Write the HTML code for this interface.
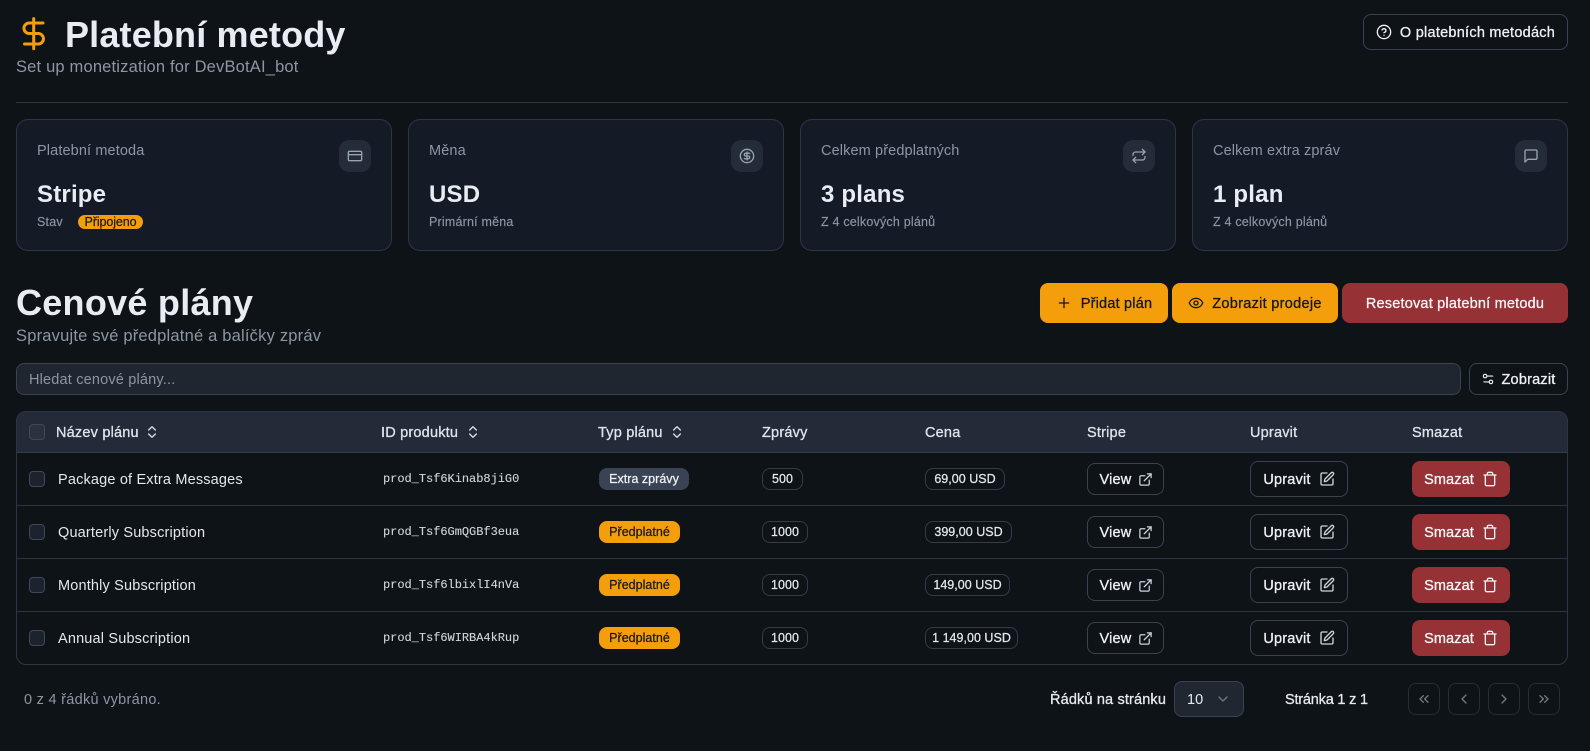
<!DOCTYPE html>
<html lang="cs"><head><meta charset="utf-8"><title>Platební metody</title>
<style>
*{box-sizing:border-box}
html,body{margin:0;width:1590px;height:751px;overflow:hidden;background:#0e1318;font-family:"Liberation Sans",sans-serif;color:#e6eaf0}
.a{position:absolute;white-space:nowrap}
.t{position:absolute;white-space:nowrap;line-height:20px;height:20px}
.m{-webkit-text-stroke:.3px currentColor}
.mut{color:#8d96a4}
.card{position:absolute;top:119px;width:376px;height:132px;background:#141b26;border:1px solid #2d3544;border-radius:12px}
.ib{position:absolute;top:20px;width:32px;height:32px;border-radius:10px;background:#242c39;display:flex;align-items:center;justify-content:center;color:#9aa3b0}
.lbl{font-size:14.5px;left:20px;top:21px;letter-spacing:.12px;color:#8d96a4}
.val{font-size:24px;font-weight:700;left:20px;top:61px;line-height:28px;height:28px;letter-spacing:.2px;color:#e9edf3}
.sub{font-size:12.5px;left:20px;top:92px;color:#8d96a4;letter-spacing:.2px;-webkit-text-stroke:.15px currentColor}
.btn{position:absolute;display:flex;align-items:center;justify-content:center;border-radius:8px;font-size:14.5px;white-space:nowrap;-webkit-text-stroke:.3px currentColor;letter-spacing:.1px}
.btn span{position:relative;top:1px}
.am{background:#f59e0b;color:#15191f}
.rd{background:#963135;color:#f4f5f7}
.ol{border:1px solid #3a4252;color:#eef1f5;background:#0e1318}
.ol svg{color:#cfd4dc}
svg{fill:none;stroke:currentColor;stroke-width:2;stroke-linecap:round;stroke-linejoin:round;flex:none;-webkit-text-stroke:0}
.cb{position:absolute;width:16px;height:16px;border:1px solid #3f4859;border-radius:4px;background:#1c232e}
.hr{position:absolute;left:17px;width:1550px;height:1px;background:#2d3544}
.th{font-size:14.5px;-webkit-text-stroke:.3px currentColor;letter-spacing:.2px;color:#dfe4ec;top:423px}
.nm{font-size:14.5px;left:58px;letter-spacing:.17px;color:#e3e7ee}
.id{font-family:"Liberation Mono",monospace;font-size:12px;left:383px;color:#cfd4dc;letter-spacing:-.03px;-webkit-text-stroke:.12px currentColor}
.pill{position:absolute;height:22px;display:flex;align-items:center;justify-content:center;border-radius:8px;font-size:12.5px;-webkit-text-stroke:.25px currentColor;letter-spacing:.02px;white-space:nowrap}
.po{border:1px solid #343c4b;color:#e3e7ee}
.pa{background:#f59e0b;color:#17191c;left:599px;width:81px}
.pg{background:#3a4354;color:#f0f2f6;left:599px;width:90px}
.pb{position:absolute;top:683px;width:32px;height:32px;border:1px solid #262d39;border-radius:8px;display:flex;align-items:center;justify-content:center;color:#727a87}
.vw{padding-left:2px}
</style></head><body>
<svg width="0" height="0" style="position:absolute"><defs>
<symbol id="ext" viewBox="0 0 24 24"><path d="M15 3h6v6"/><path d="M10 14 21 3"/><path d="M18 13v6a2 2 0 0 1-2 2H5a2 2 0 0 1-2-2V8a2 2 0 0 1 2-2h6"/></symbol>
<symbol id="pen" viewBox="0 0 24 24"><path d="M12 3H5a2 2 0 0 0-2 2v14a2 2 0 0 0 2 2h14a2 2 0 0 0 2-2v-7"/><path d="M18.375 2.625a1 1 0 0 1 3 3l-9.013 9.014a2 2 0 0 1-.853.505l-2.873.84a.5.5 0 0 1-.62-.62l.84-2.873a2 2 0 0 1 .506-.852z"/></symbol>
<symbol id="tr" viewBox="0 0 24 24"><path d="M3 6h18"/><path d="M19 6v14c0 1-1 2-2 2H7c-1 0-2-1-2-2V6"/><path d="M8 6V4c0-1 1-2 2-2h4c1 0 2 1 2 2v2"/></symbol>
<symbol id="sort" viewBox="0 0 24 24"><path d="m7 15 5 5 5-5"/><path d="m7 9 5-5 5 5"/></symbol>
</defs></svg>

<svg class="a" style="left:0;top:0;color:#f59e0b;stroke-width:3" width="60" height="60" viewBox="0 0 60 60"><path d="M33.7 18.6V48.8"/><path d="M43 23H29.2a5.25 5.25 0 0 0 0 10.5H38.2a5.25 5.25 0 0 1 0 10.5H24.5"/></svg>
<div class="a" style="left:65px;top:14px;font-size:36px;line-height:42px;font-weight:700;color:#e9edf3;letter-spacing:.17px">Platební metody</div>
<div class="t mut" style="left:16px;top:57px;font-size:16.5px;letter-spacing:.18px">Set up monetization for DevBotAI_bot</div>
<div class="btn ol" style="left:1363px;top:14px;width:205px;height:36px;gap:8px"><svg width="16" height="16" viewBox="0 0 24 24" style="color:#eef1f5"><circle cx="12" cy="12" r="10"/><path d="M9.09 9a3 3 0 0 1 5.83 1c0 2-3 3-3 3"/><path d="M12 17h.01"/></svg><span style="letter-spacing:.25px">O platebních metodách</span></div>
<div class="a" style="left:16px;top:102px;width:1552px;height:1px;background:#2d3544"></div>

<div class="card" style="left:16px"><div class="t lbl">Platební metoda</div><div class="ib" style="left:322px"><svg width="16" height="16" viewBox="0 0 24 24"><rect x="2" y="5" width="20" height="14" rx="2"/><line x1="2" x2="22" y1="10" y2="10"/></svg></div><div class="t val">Stripe</div><div class="t sub">Stav</div><div class="a" style="left:61px;top:95px;width:65px;height:14px;border-radius:7px;background:#f59e0b;color:#17191c;font-size:12.5px;line-height:14px;text-align:center;-webkit-text-stroke:.2px currentColor;letter-spacing:-.1px">Připojeno</div></div>
<div class="card" style="left:408px"><div class="t lbl">Měna</div><div class="ib" style="left:322px"><svg width="16" height="16" viewBox="0 0 24 24"><circle cx="12" cy="12" r="10"/><path d="M16 8h-6a2 2 0 1 0 0 4h4a2 2 0 1 1 0 4H8"/><path d="M12 18V6"/></svg></div><div class="t val">USD</div><div class="t sub">Primární měna</div></div>
<div class="card" style="left:800px"><div class="t lbl">Celkem předplatných</div><div class="ib" style="left:322px"><svg width="16" height="16" viewBox="0 0 24 24"><path d="m17 2 4 4-4 4"/><path d="M3 11v-1a4 4 0 0 1 4-4h14"/><path d="m7 22-4-4 4-4"/><path d="M21 13v1a4 4 0 0 1-4 4H3"/></svg></div><div class="t val">3 plans</div><div class="t sub">Z 4 celkových plánů</div></div>
<div class="card" style="left:1192px"><div class="t lbl">Celkem extra zpráv</div><div class="ib" style="left:322px"><svg width="16" height="16" viewBox="0 0 24 24"><path d="M21 15a2 2 0 0 1-2 2H7l-4 4V5a2 2 0 0 1 2-2h14a2 2 0 0 1 2 2z"/></svg></div><div class="t val">1 plan</div><div class="t sub">Z 4 celkových plánů</div></div>

<div class="a" style="left:16px;top:282px;font-size:36px;line-height:42px;font-weight:700;color:#e9edf3;letter-spacing:.27px">Cenové plány</div>
<div class="t mut" style="left:16px;top:326px;font-size:16.5px;letter-spacing:.2px">Spravujte své předplatné a balíčky zpráv</div>
<div class="btn am" style="left:1040px;top:283px;width:128px;height:40px;gap:9px"><svg width="16" height="16" viewBox="0 0 24 24"><path d="M5 12h14"/><path d="M12 5v14"/></svg><span style="letter-spacing:.2px">Přidat plán</span></div>
<div class="btn am" style="left:1172px;top:283px;width:166px;height:40px;gap:8px"><svg width="16" height="16" viewBox="0 0 24 24"><path d="M2.062 12.348a1 1 0 0 1 0-.696 10.75 10.75 0 0 1 19.876 0 1 1 0 0 1 0 .696 10.75 10.75 0 0 1-19.876 0"/><circle cx="12" cy="12" r="3"/></svg><span style="letter-spacing:.3px">Zobrazit prodeje</span></div>
<div class="btn rd" style="left:1342px;top:283px;width:226px;height:40px;letter-spacing:.2px"><span>Resetovat platební metodu</span></div>

<div class="a" style="left:16px;top:363px;width:1445px;height:32px;background:#1f262f;border:1px solid #3a4252;border-radius:8px"></div>
<div class="t mut" style="left:29px;top:370px;font-size:14.5px;letter-spacing:.18px">Hledat cenové plány...</div>
<div class="btn ol" style="left:1469px;top:363px;width:99px;height:32px;gap:7px;padding-right:1px"><svg width="14" height="14" viewBox="0 0 24 24" style="color:#eef1f5"><path d="M20 7h-9"/><path d="M14 17H5"/><circle cx="17" cy="17" r="3"/><circle cx="7" cy="7" r="3"/></svg><span style="letter-spacing:.2px">Zobrazit</span></div>

<!-- table -->
<div class="a" style="left:16px;top:411px;width:1552px;height:254px;border:1px solid #2d3544;border-radius:10px"></div>
<div class="a" style="left:17px;top:412px;width:1550px;height:40px;background:#232b38;border-radius:9px 9px 0 0"></div>
<div class="hr" style="top:452px;background:#343c4b"></div><div class="hr" style="top:505px"></div><div class="hr" style="top:558px"></div><div class="hr" style="top:611px"></div>

<div class="cb" style="left:29px;top:424px;background:#2a3240"></div>
<div class="t th" style="left:56px">Název plánu</div><svg class="a" style="left:144px;top:424px;color:#dfe4ec" width="16" height="16" viewBox="0 0 24 24"><use href="#sort"/></svg>
<div class="t th" style="left:381px">ID produktu</div><svg class="a" style="left:465px;top:424px;color:#dfe4ec" width="16" height="16" viewBox="0 0 24 24"><use href="#sort"/></svg>
<div class="t th" style="left:598px">Typ plánu</div><svg class="a" style="left:669px;top:424px;color:#dfe4ec" width="16" height="16" viewBox="0 0 24 24"><use href="#sort"/></svg>
<div class="t th" style="left:762px">Zprávy</div>
<div class="t th" style="left:925px">Cena</div>
<div class="t th" style="left:1087px">Stripe</div>
<div class="t th" style="left:1250px">Upravit</div>
<div class="t th" style="left:1412px">Smazat</div>

<!-- row 1 -->
<div class="cb" style="left:29px;top:471px"></div><div class="t nm" style="top:470px">Package of Extra Messages</div><div class="t id" style="top:469px">prod_Tsf6Kinab8jiG0</div>
<div class="pill pg" style="top:468px">Extra zprávy</div><div class="pill po" style="left:762px;top:468px;width:41px">500</div><div class="pill po" style="left:925px;top:468px;width:80px">69,00 USD</div>
<div class="btn ol vw" style="left:1087px;top:463px;width:77px;height:32px;gap:7px"><span style="letter-spacing:.2px">View</span><svg width="15" height="15" viewBox="0 0 24 24"><use href="#ext"/></svg></div>
<div class="btn ol" style="left:1250px;top:461px;width:98px;height:36px;gap:8px"><span style="letter-spacing:.2px">Upravit</span><svg width="16" height="16" viewBox="0 0 24 24"><use href="#pen"/></svg></div>
<div class="btn rd" style="left:1412px;top:461px;width:98px;height:36px;gap:8px"><span>Smazat</span><svg width="16" height="16" viewBox="0 0 24 24"><use href="#tr"/></svg></div>
<!-- row 2 -->
<div class="cb" style="left:29px;top:524px"></div><div class="t nm" style="top:523px">Quarterly Subscription</div><div class="t id" style="top:522px">prod_Tsf6GmQGBf3eua</div>
<div class="pill pa" style="top:521px">Předplatné</div><div class="pill po" style="left:762px;top:521px;width:46px">1000</div><div class="pill po" style="left:925px;top:521px;width:87px">399,00 USD</div>
<div class="btn ol vw" style="left:1087px;top:516px;width:77px;height:32px;gap:7px"><span style="letter-spacing:.2px">View</span><svg width="15" height="15" viewBox="0 0 24 24"><use href="#ext"/></svg></div>
<div class="btn ol" style="left:1250px;top:514px;width:98px;height:36px;gap:8px"><span style="letter-spacing:.2px">Upravit</span><svg width="16" height="16" viewBox="0 0 24 24"><use href="#pen"/></svg></div>
<div class="btn rd" style="left:1412px;top:514px;width:98px;height:36px;gap:8px"><span>Smazat</span><svg width="16" height="16" viewBox="0 0 24 24"><use href="#tr"/></svg></div>
<!-- row 3 -->
<div class="cb" style="left:29px;top:577px"></div><div class="t nm" style="top:576px">Monthly Subscription</div><div class="t id" style="top:575px">prod_Tsf6lbixlI4nVa</div>
<div class="pill pa" style="top:574px">Předplatné</div><div class="pill po" style="left:762px;top:574px;width:46px">1000</div><div class="pill po" style="left:925px;top:574px;width:85px">149,00 USD</div>
<div class="btn ol vw" style="left:1087px;top:569px;width:77px;height:32px;gap:7px"><span style="letter-spacing:.2px">View</span><svg width="15" height="15" viewBox="0 0 24 24"><use href="#ext"/></svg></div>
<div class="btn ol" style="left:1250px;top:567px;width:98px;height:36px;gap:8px"><span style="letter-spacing:.2px">Upravit</span><svg width="16" height="16" viewBox="0 0 24 24"><use href="#pen"/></svg></div>
<div class="btn rd" style="left:1412px;top:567px;width:98px;height:36px;gap:8px"><span>Smazat</span><svg width="16" height="16" viewBox="0 0 24 24"><use href="#tr"/></svg></div>
<!-- row 4 -->
<div class="cb" style="left:29px;top:630px"></div><div class="t nm" style="top:629px">Annual Subscription</div><div class="t id" style="top:628px">prod_Tsf6WIRBA4kRup</div>
<div class="pill pa" style="top:627px">Předplatné</div><div class="pill po" style="left:762px;top:627px;width:46px">1000</div><div class="pill po" style="left:925px;top:627px;width:93px">1 149,00 USD</div>
<div class="btn ol vw" style="left:1087px;top:622px;width:77px;height:32px;gap:7px"><span style="letter-spacing:.2px">View</span><svg width="15" height="15" viewBox="0 0 24 24"><use href="#ext"/></svg></div>
<div class="btn ol" style="left:1250px;top:620px;width:98px;height:36px;gap:8px"><span style="letter-spacing:.2px">Upravit</span><svg width="16" height="16" viewBox="0 0 24 24"><use href="#pen"/></svg></div>
<div class="btn rd" style="left:1412px;top:620px;width:98px;height:36px;gap:8px"><span>Smazat</span><svg width="16" height="16" viewBox="0 0 24 24"><use href="#tr"/></svg></div>

<!-- footer -->
<div class="t mut" style="left:24px;top:690px;font-size:14.5px;letter-spacing:.28px">0 z 4 řádků vybráno.</div>
<div class="t m" style="left:1050px;top:690px;font-size:14.5px;letter-spacing:.15px">Řádků na stránku</div>
<div class="a" style="left:1174px;top:681px;width:70px;height:36px;background:#202731;border:1px solid #3a4252;border-radius:8px"></div>
<div class="t" style="left:1187px;top:690px;font-size:14.5px">10</div>
<svg class="a" style="left:1215px;top:691px;color:#6f7785" width="16" height="16" viewBox="0 0 24 24"><path d="m6 9 6 6 6-6"/></svg>
<div class="t m" style="left:1285px;top:690px;font-size:14.5px;letter-spacing:-.2px">Stránka 1 z 1</div>
<div class="pb" style="left:1408px"><svg width="16" height="16" viewBox="0 0 24 24"><path d="m11 17-5-5 5-5"/><path d="m18 17-5-5 5-5"/></svg></div>
<div class="pb" style="left:1448px"><svg width="16" height="16" viewBox="0 0 24 24"><path d="m15 18-6-6 6-6"/></svg></div>
<div class="pb" style="left:1488px"><svg width="16" height="16" viewBox="0 0 24 24"><path d="m9 18 6-6-6-6"/></svg></div>
<div class="pb" style="left:1528px"><svg width="16" height="16" viewBox="0 0 24 24"><path d="m6 17 5-5-5-5"/><path d="m13 17 5-5-5-5"/></svg></div>
</body></html>
